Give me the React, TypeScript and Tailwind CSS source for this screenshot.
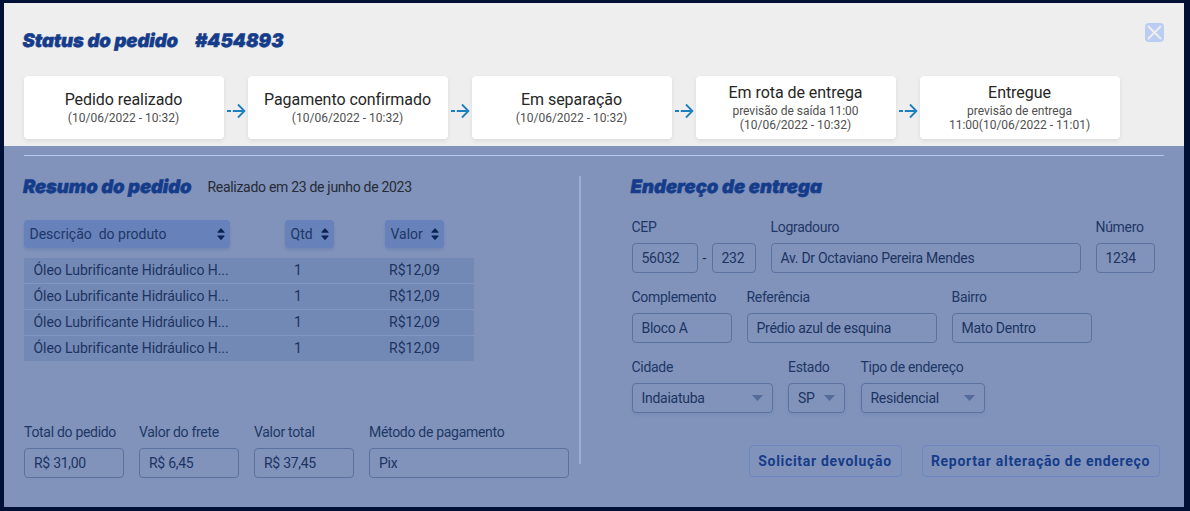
import React from "react";

const heading =
  "font-['Inter'] text-[18.5px] font-black italic leading-6 text-[#153c8a] whitespace-pre [-webkit-text-stroke:0.5px_#153c8a] [text-rendering:geometricPrecision]";

function Arrow() {
  return (
    <svg className="mt-[6px] h-[16px] w-[24px] shrink-0" viewBox="0 0 24 16" fill="none" stroke="#1b7fc4" strokeWidth="1.8">
      <path d="M3 8h4M8.8 8H20M14 1.5L20.4 8 14 14.5" />
    </svg>
  );
}

function Step({ title, lines }: { title: string; lines: string[] }) {
  return (
    <div className="flex h-[63px] w-[200px] shrink-0 flex-col items-center justify-center rounded-[4px] bg-white shadow-[0_2px_4px_rgba(0,0,0,0.08)]">
      <div className="mb-[2px] text-[16px] leading-[18px] tracking-[-0.05px] text-[#262626]">{title}</div>
      {lines.map((l) => (
        <div key={l} className="text-[12px] leading-[14px] text-[#505050]">{l}</div>
      ))}
    </div>
  );
}

function Sort() {
  return (
    <svg className="h-[12px] w-[8px] shrink-0" viewBox="0 0 8 12" fill="#0b2351">
      <path d="M0.5 4 3.6 0.4Q4 0 4.4 0.4L7.5 4Q7.8 4.7 7.2 4.7H0.8Q0.2 4.7 0.5 4ZM0.5 8.2 3.6 11.8Q4 12.2 4.4 11.8L7.5 8.2Q7.8 7.5 7.2 7.5H0.8Q0.2 7.5 0.5 8.2Z" />
    </svg>
  );
}

function Head({ label, className }: { label: string; className: string }) {
  return (
    <div
      className={
        "flex h-[28px] items-center justify-between rounded-[4px] bg-[#6781ba] pl-[5.5px] pr-[5px] whitespace-pre text-[#1e3765] shadow-[0_2px_3px_rgba(60,90,150,0.2)] " +
        className
      }
    >
      <span>{label}</span>
      <Sort />
    </div>
  );
}

function Box({ value, className, select }: { value: string; className: string; select?: boolean }) {
  return (
    <div
      className={
        "flex h-[30px] items-center justify-between rounded-[4px] border border-[#5b71a0] pl-[9px] pr-[9px] whitespace-nowrap tracking-[-0.28px] text-[#1c3361] " +
        (select ? "shadow-[0_2px_3px_rgba(60,90,150,0.12)] " : "") +
        className
      }
    >
      {value}
      {select && (
        <svg className="h-[6px] w-[11px]" viewBox="0 0 11 6" fill="#556b9a">
          <path d="M0 0h11L5.5 6z" />
        </svg>
      )}
    </div>
  );
}

function Field({ label, children }: { label: string; children: React.ReactNode }) {
  return (
    <div className="flex flex-col">
      <div className="mb-[7px] h-[18px] leading-[18px] tracking-[-0.3px] whitespace-nowrap text-[#1e3765]">{label}</div>
      {children}
    </div>
  );
}

export default function App() {
  return (
    <div className="h-[511px] w-[1190px] overflow-hidden bg-[#001135] pl-[4px] pt-[3px] font-['Roboto',sans-serif] text-[14px]">
      <div className="flex h-[504px] w-[1179.5px] flex-col bg-[#8193bb]">
        <section className="flex h-[143px] shrink-0 flex-col bg-[#eeeeee] pl-[19.5px] pr-[19.5px]">
          <div className="flex h-[73px] items-start justify-between">
            <div className="flex pt-[26px]">
              <h1 className={heading + " w-[172.5px] -ml-px tracking-[-0.07px]"}>Status do pedido</h1>
              <span className={heading + " tracking-[0.1px]"}>#454893</span>
            </div>
            <button className="mt-[20px] flex h-[19px] w-[19px] items-center justify-center rounded-[4px] bg-[#bccdf4]">
              <svg className="h-[19px] w-[19px]" viewBox="0 0 19 19" stroke="#eeeeee" strokeWidth="1.9" strokeLinecap="round">
                <path d="M3.5 3.5l12 12M15.5 3.5l-12 12" />
              </svg>
            </button>
          </div>
          <div className="flex items-center">
            <Step title="Pedido realizado" lines={["(10/06/2022 - 10:32)"]} />
            <Arrow />
            <Step title="Pagamento confirmado" lines={["(10/06/2022 - 10:32)"]} />
            <Arrow />
            <Step title="Em separação" lines={["(10/06/2022 - 10:32)"]} />
            <Arrow />
            <Step title="Em rota de entrega" lines={["previsão de saída 11:00", "(10/06/2022 - 10:32)"]} />
            <Arrow />
            <Step title="Entregue" lines={["previsão de entrega", "11:00(10/06/2022 - 11:01)"]} />
          </div>
        </section>
        <section className="flex flex-1 flex-col pl-[20px] pr-[19.5px] pt-[9px]">
          <div className="h-px shrink-0 bg-[#b5c7f2]" />
          <div className="flex pt-[20px]">
            <div className="w-[555px]">
              <div className="flex h-[22px] items-center">
                <h2 className={heading + " w-[184.5px] -ml-px tracking-[-0.1px]"}>Resumo do pedido</h2>
                <span className="tracking-[-0.3px] text-[#262a35]">Realizado em 23 de junho de 2023</span>
              </div>
              <div className="mt-[22px] flex">
                <Head label="Descrição  do produto" className="w-[206px]" />
                <Head label="Qtd" className="ml-[55px] w-[49px]" />
                <Head label="Valor" className="ml-[51px] w-[59px]" />
              </div>
              <div className="mt-[10px] flex h-[103px] w-[449.5px] flex-col gap-px bg-[#8196c0] tracking-[-0.06px] text-[#1c3361]">
                {[0, 1, 2, 3].map((i) => (
                  <div key={i} className="flex h-[25px] items-center bg-[#7389b5] pl-[9.5px]">
                    <span className="w-[260.5px]">Óleo Lubrificante Hidráulico H...</span>
                    <span className="w-[95px]">1</span>
                    <span className="tracking-[0.02px]">R$12,09</span>
                  </div>
                ))}
              </div>
              <div className="mt-[62px] flex gap-[15.5px]">
                <Field label="Total do pedido"><Box value="R$ 31,00" className="w-[99.5px]" /></Field>
                <Field label="Valor do frete"><Box value="R$ 6,45" className="w-[99.5px]" /></Field>
                <Field label="Valor total"><Box value="R$ 37,45" className="w-[99.5px]" /></Field>
                <Field label="Método de pagamento"><Box value="Pix" className="w-[199.5px]" /></Field>
              </div>
            </div>
            <div className="h-[288px] w-[2px] bg-[#9cadda]" />
            <div className="ml-[50.5px] w-[528px]">
              <h2 className={heading + " h-[22px] -ml-px leading-[22px] tracking-[0px]"}>Endereço de entrega</h2>
              <div className="mt-[20px] flex gap-[15px]">
                <Field label="CEP">
                  <div className="flex items-center">
                    <Box value="56032" className="w-[66px]" />
                    <span className="w-[14px] text-center text-[#262a35]">-</span>
                    <Box value="232" className="w-[44px]" />
                  </div>
                </Field>
                <Field label="Logradouro"><Box value="Av. Dr Octaviano Pereira Mendes" className="w-[310px]" /></Field>
                <Field label="Número"><Box value="1234" className="w-[59px]" /></Field>
              </div>
              <div className="mt-[15px] flex gap-[15px]">
                <Field label="Complemento"><Box value="Bloco A" className="w-[100px]" /></Field>
                <Field label="Referência"><Box value="Prédio azul de esquina" className="w-[190px]" /></Field>
                <Field label="Bairro"><Box value="Mato Dentro" className="w-[140px]" /></Field>
              </div>
              <div className="mt-[15px] flex gap-[15.5px]">
                <Field label="Cidade"><Box select value="Indaiatuba" className="w-[141px]" /></Field>
                <Field label="Estado"><Box select value="SP" className="w-[57px]" /></Field>
                <Field label="Tipo de endereço"><Box select value="Residencial" className="w-[124px]" /></Field>
              </div>
              <div className="mt-[32px] flex justify-end gap-[20px] font-bold text-[#153c8a]">
                <button className="h-[32px] w-[153px] rounded-[4px] border border-[#6c87c2] tracking-[0.7px] whitespace-nowrap">Solicitar devolução</button>
                <button className="h-[32px] w-[238px] rounded-[4px] border border-[#6c87c2] tracking-[0.7px] whitespace-nowrap">Reportar alteração de endereço</button>
              </div>
            </div>
          </div>
        </section>
      </div>
    </div>
  );
}
